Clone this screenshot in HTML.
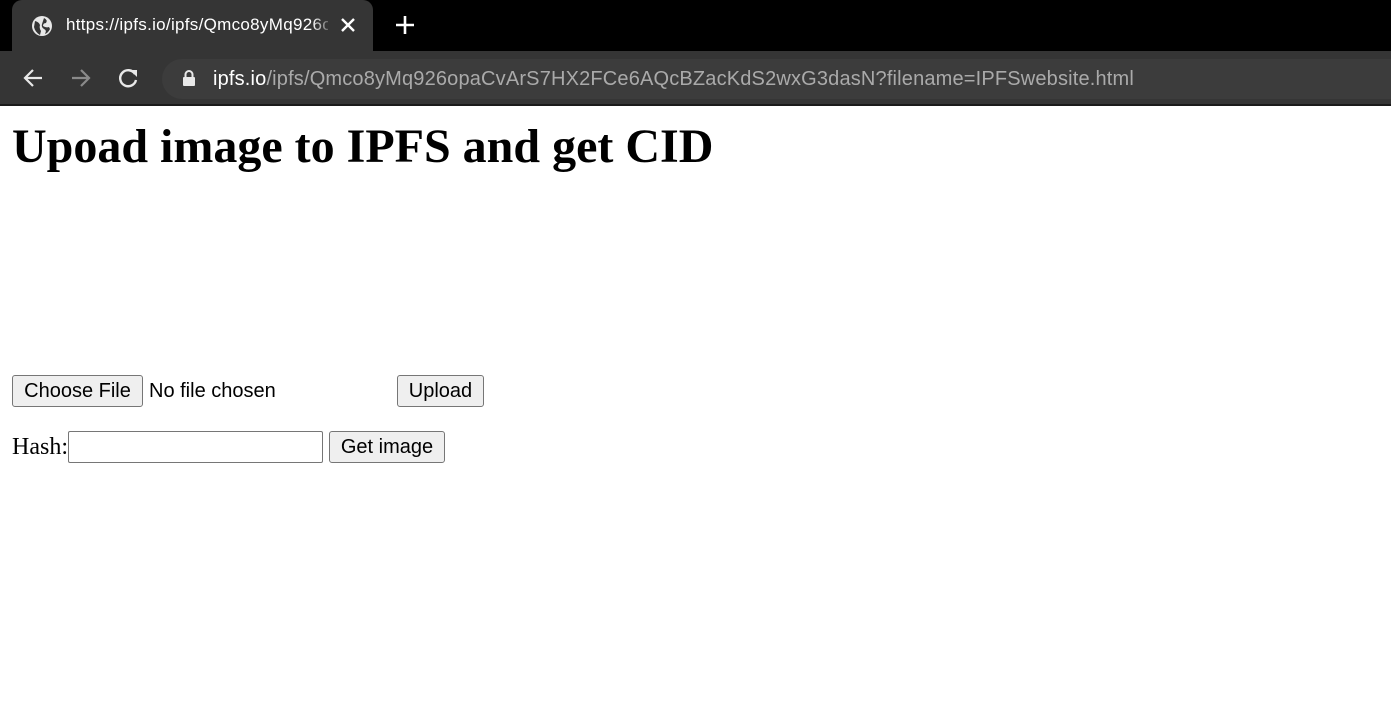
<!DOCTYPE html>
<html><head><style>
body{margin:0;width:1391px;height:710px;background:#fff;position:relative;overflow:hidden;font-family:"Liberation Sans",Arial,sans-serif}
.a{position:absolute}
.btn{position:absolute;background:#efefef;border:1px solid #767676;border-radius:3px;box-sizing:border-box;font-size:20px;color:#000;text-align:center;line-height:30px;height:32px}
</style></head><body>
<div class="a" style="left:0;top:0;width:1391px;height:51px;background:#000"></div>
<div class="a" style="left:12px;top:0;width:361px;height:51px;background:#353535;border-radius:10px 10px 0 0"></div>
<svg class="a" style="left:31px;top:15px" width="22" height="22" viewBox="0 0 22 22"><circle cx="11" cy="11" r="10" fill="#e8e8e8"/><path d="M4 6 Q8 7 9 10 Q8 13 10 16 L9 20 Q4 17 3 12Z M13 3 Q17 5 15 8 Q12 8 12 11 Q15 13 18 12 L19 14 Q17 18 14 19 Q16 15 13 14 Q10 12 11 9Z" fill="#353535"/></svg>
<div class="a" style="left:66px;top:14px;font-size:17px;letter-spacing:0.3px;color:#fff;width:262px;overflow:hidden;white-space:nowrap;line-height:22px">https://ipfs.io/ipfs/Qmco8yMq926opaCv</div>
<div class="a" style="left:312px;top:12px;width:22px;height:26px;background:linear-gradient(90deg,rgba(53,53,53,0),#353535)"></div>
<svg class="a" style="left:340px;top:17px" width="16" height="16"><path d="M2 2L14 14M14 2L2 14" stroke="#fff" stroke-width="2.4"/></svg>
<svg class="a" style="left:395px;top:15px" width="20" height="20"><path d="M10 1V19M1 10H19" stroke="#fff" stroke-width="2.6"/></svg>
<div class="a" style="left:0;top:51px;width:1391px;height:53px;background:#353535"></div>
<div class="a" style="left:0;top:104px;width:1391px;height:2px;background:#1a1a1a"></div>
<svg class="a" style="left:22px;top:68px" width="22" height="20"><path d="M20 10H3M11 2L3 10L11 18" stroke="#e8e8e8" stroke-width="2.2" fill="none"/></svg>
<svg class="a" style="left:70px;top:68px" width="22" height="20"><path d="M2 10H19M11 2L19 10L11 18" stroke="#8a8a8a" stroke-width="2.2" fill="none"/></svg>
<svg class="a" style="left:118px;top:67px" width="22" height="22"><path d="M17 7A8 8 0 1 0 18 13" stroke="#e8e8e8" stroke-width="2.4" fill="none"/><path d="M12 3H19V10Z" fill="#e8e8e8"/></svg>
<div class="a" style="left:162px;top:59px;width:1260px;height:40px;background:#3c3c3c;border-radius:20px"></div>
<svg class="a" style="left:182px;top:69px" width="14" height="18"><path d="M3.5 8V5.5A3.5 3.5 0 0 1 10.5 5.5V8" stroke="#e8e8e8" stroke-width="2" fill="none"/><rect x="1" y="8" width="12" height="9" rx="1" fill="#e8e8e8"/></svg>
<div class="a" style="left:213px;top:67px;font-size:20px;letter-spacing:0.17px;line-height:24px;color:#aaa;white-space:nowrap"><span style="color:#fff">ipfs.io</span>/ipfs/Qmco8yMq926opaCvArS7HX2FCe6AQcBZacKdS2wxG3dasN?filename=IPFSwebsite.html</div>
<div class="a" style="left:12px;top:119px;font-family:'Liberation Serif',serif;font-weight:bold;font-size:48px;line-height:56px;white-space:nowrap">Upoad image to IPFS and get CID</div>
<div class="btn" style="left:12px;top:375px;width:131px">Choose File</div>
<div class="a" style="left:149px;top:379px;font-size:20px;line-height:24px">No file chosen</div>
<div class="btn" style="left:397px;top:375px;width:87px">Upload</div>
<div class="a" style="left:12px;top:434px;font-family:'Liberation Serif',serif;font-size:24px;line-height:26px">Hash:</div>
<div class="a" style="left:68px;top:431px;width:255px;height:32px;border:1px solid #767676;box-sizing:border-box;border-radius:2px"></div>
<div class="btn" style="left:329px;top:431px;width:116px">Get image</div>
</body></html>
